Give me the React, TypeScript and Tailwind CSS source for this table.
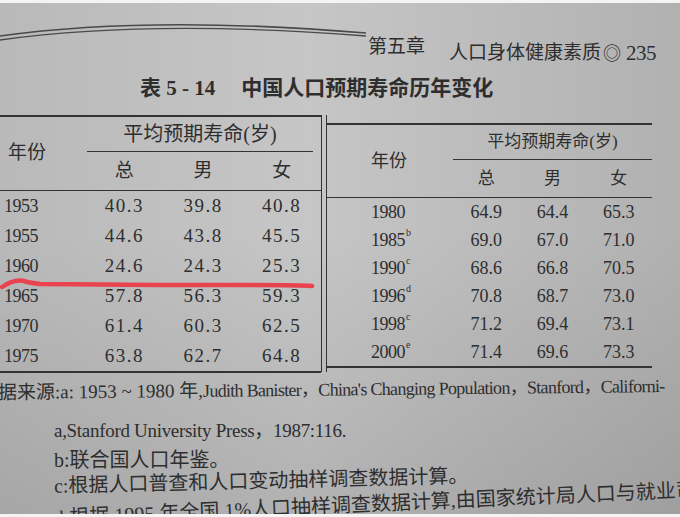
import React from 'react';

const leftRows = [
  ['1953', '40.3', '39.8', '40.8'],
  ['1955', '44.6', '43.8', '45.5'],
  ['1960', '24.6', '24.3', '25.3'],
  ['1965', '57.8', '56.3', '59.3'],
  ['1970', '61.4', '60.3', '62.5'],
  ['1975', '63.8', '62.7', '64.8'],
];

const rightRows = [
  ['1980', '', '64.9', '64.4', '65.3'],
  ['1985', 'b', '69.0', '67.0', '71.0'],
  ['1990', 'c', '68.6', '66.8', '70.5'],
  ['1996', 'd', '70.8', '68.7', '73.0'],
  ['1998', 'c', '71.2', '69.4', '73.1'],
  ['2000', 'e', '71.4', '69.6', '73.3'],
];

const serif = "font-['Liberation_Serif','Noto_Sans_CJK_SC',serif]";

export default function App() {
  return (
    <div className={`w-[680px] h-[517px] bg-[#f4f4f4] pt-[3px] pb-[3px] overflow-hidden text-[#2e2e2e] ${serif}`}>
      <div className="h-full overflow-hidden bg-[linear-gradient(to_bottom,rgba(0,0,0,0)_45%,rgba(0,0,0,0.1)),linear-gradient(to_right,#b9b9ba,#c6c6c7_45%,#b1b1b2)]">
        {/* running head */}
        <div className="flex items-start h-[62px]">
          <svg width="368" height="50" viewBox="0 0 368 50" className="shrink-0">
            <path d="M0 33 Q 150 12 366 30" stroke="#4a4a4a" strokeWidth="1.6" fill="none" />
            <path d="M0 37 Q 150 16 366 33" stroke="#4a4a4a" strokeWidth="1.4" fill="none" />
          </svg>
          <div className="flex items-center pt-[26px] whitespace-nowrap">
            <span className="text-[19px] leading-none">第五章</span>
            <span className="text-[19px] leading-none ml-[24px] mt-[12px]">人口身体健康素质</span>
            <span className="text-[18px] leading-none ml-[2px] mt-[14px]">◎</span>
            <span className="text-[21px] leading-none ml-[5px] mt-[14px] tracking-[-0.5px]">235</span>
          </div>
        </div>

        {/* table title */}
        <div className="flex items-end h-[40px] pl-[140px] pb-[6px] whitespace-nowrap font-bold">
          <span className="text-[21px] leading-none">表 5 - 14</span>
          <span className="text-[21px] leading-none ml-[26px] mt-[6px]">中国人口预期寿命历年变化</span>
        </div>

        {/* table */}
        <div className="flex items-start mt-[10px] w-[652px]">
          <div className="w-[321px] shrink-0">
            <div className="flex h-[75px] border-t-2 border-[#333]">
              <div className="w-[85px] flex items-center pl-[8px] text-[19px]">年份</div>
              <div className="flex-1 flex flex-col">
                <div className="h-[35px] flex items-center justify-center border-b border-[#333] ml-[2px] mr-[8px] text-[20px]">
                  平均预期寿命(岁)
                </div>
                <div className="flex-1 grid grid-cols-3 text-[19px]">
                  <div className="flex items-center justify-center">总</div>
                  <div className="flex items-center justify-center">男</div>
                  <div className="flex items-center justify-center">女</div>
                </div>
              </div>
            </div>
            <div className="border-t-[1.5px] border-b-2 border-[#333]">
              {leftRows.map((r) => (
                <div key={r[0]} className="flex h-[30px] items-center">
                  <div className="w-[85px] pl-[4px] text-[18px] tracking-[-0.5px]">{r[0]}</div>
                  {r.slice(1).map((v, i) => (
                    <div key={i} className="flex-1 text-center text-[19px] tracking-[1.5px]">{v}</div>
                  ))}
                </div>
              ))}
            </div>
          </div>

          <div className="w-[6px] h-[257px] shrink-0 border-x border-[#333]" />

          <div className="flex-1 mt-[8px]">
            <div className="flex h-[74px] border-t-2 border-[#333]">
              <div className="w-[126px] flex items-center pl-[44px] text-[18px]">年份</div>
              <div className="flex-1 flex flex-col">
                <div className="h-[35px] flex items-center justify-center border-b border-[#333] text-[17px]">
                  平均预期寿命(岁)
                </div>
                <div className="flex-1 grid grid-cols-3 text-[17px]">
                  <div className="flex items-center justify-center">总</div>
                  <div className="flex items-center justify-center">男</div>
                  <div className="flex items-center justify-center">女</div>
                </div>
              </div>
            </div>
            <div className="border-t-[1.5px] border-b-2 border-[#333]">
              {rightRows.map((r) => (
                <div key={r[0]} className="flex h-[28px] items-center">
                  <div className="w-[126px] pl-[44px] text-[18px] tracking-[-0.5px] flex items-start">
                    <span>{r[0]}</span>
                    {r[1] && <span className="text-[10px] leading-none ml-[1px] mt-[1px]">{r[1]}</span>}
                  </div>
                  {r.slice(2).map((v, i) => (
                    <div key={i} className="flex-1 text-center text-[18px]">{v}</div>
                  ))}
                </div>
              ))}
            </div>
          </div>
        </div>

        {/* red pen mark under 1960 row */}
        <svg width="320" height="14" viewBox="0 0 320 14" className="block -mt-[97px] mb-[83px]">
          <path d="M2 11 Q 14 3 24 5 Q 30 7 40 8 L 160 9 L 250 9 Q 300 9 312 10" stroke="#e9434f" strokeWidth="4.5" strokeLinecap="round" fill="none" />
        </svg>

        {/* sources */}
        <div className="text-[19px] whitespace-nowrap">
          <div className="h-[40px] flex items-center -ml-[2px] rotate-[-0.6deg] origin-left">
            <span>据来源:a: 1953 ~ 1980 年,</span>
            <span className="text-[18px] tracking-[-0.7px]">Judith Banister，China's Changing Population，Stanford，Californi-</span>
          </div>
          <div className="h-[36px] flex items-center pl-[54px] tracking-[-0.3px]">a,Stanford University Press，1987:116.</div>
          <div className="h-[22px] flex items-center pl-[54px] text-[20px]">b:联合国人口年鉴。</div>
          <div className="h-[32px] flex items-center pl-[54px] text-[20px] rotate-[-1.4deg] origin-left">
            c:根据人口普查和人口变动抽样调查数据计算。
          </div>
          <div className="h-[34px] flex items-center pl-[54px] text-[20px] rotate-[-2.5deg] origin-left">
            d:根据 1995 年全国 1%人口抽样调查数据计算,由国家统计局人口与就业司
          </div>
        </div>
      </div>
    </div>
  );
}
